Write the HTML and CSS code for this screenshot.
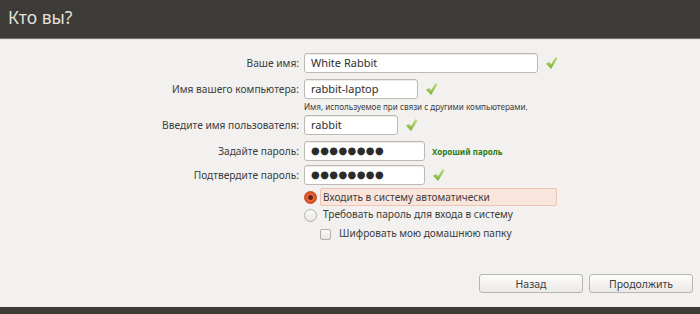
FILE: index.html
```html
<!DOCTYPE html>
<html lang="ru">
<head>
    <meta charset="UTF-8">
    <meta name="viewport" content="width=device-width, initial-scale=1.0">
    <title>Кто вы?</title>
    <link rel="stylesheet" href="styles.css">
</head>
<body>
    <div class="header">Кто вы?</div>

    <div class="page">
        <div class="form">
            <div class="row">
                <label class="label">Ваше имя:</label>
                <div class="field">
                    <div class="input wide">White Rabbit</div>
                    <svg class="check" viewBox="0 0 14 15"><path d="M1 8.3 L4.6 6.4 L6.4 9.2 L11.2 1 L13.6 2.4 L6.6 14 Z"/></svg>
                </div>
            </div>
            <div class="row">
                <label class="label">Имя вашего компьютера:</label>
                <div class="field">
                    <div class="input host">rabbit-laptop</div>
                    <svg class="check" viewBox="0 0 14 15"><path d="M1 8.3 L4.6 6.4 L6.4 9.2 L11.2 1 L13.6 2.4 L6.6 14 Z"/></svg>
                </div>
            </div>
            <div class="hint">Имя, используемое при связи с другими компьютерами.</div>
            <div class="row">
                <label class="label">Введите имя пользователя:</label>
                <div class="field">
                    <div class="input user">rabbit</div>
                    <svg class="check" viewBox="0 0 14 15"><path d="M1 8.3 L4.6 6.4 L6.4 9.2 L11.2 1 L13.6 2.4 L6.6 14 Z"/></svg>
                </div>
            </div>
            <div class="row tight">
                <label class="label">Задайте пароль:</label>
                <div class="field">
                    <div class="input pass"><span class="dots">●●●●●●●●</span></div>
                    <span class="strength">Хороший пароль</span>
                </div>
            </div>
            <div class="row">
                <label class="label">Подтвердите пароль:</label>
                <div class="field">
                    <div class="input pass"><span class="dots">●●●●●●●●</span></div>
                    <svg class="check" viewBox="0 0 14 15"><path d="M1 8.3 L4.6 6.4 L6.4 9.2 L11.2 1 L13.6 2.4 L6.6 14 Z"/></svg>
                </div>
            </div>
        </div>

        <div class="options">
            <div class="option">
                <span class="radio checked"></span>
                <span class="option-text selected">Входить в систему автоматически</span>
            </div>
            <div class="option">
                <span class="radio"></span>
                <span class="option-text">Требовать пароль для входа в систему</span>
            </div>
            <div class="option sub">
                <span class="checkbox"></span>
                <span class="option-text">Шифровать мою домашнюю папку</span>
            </div>
        </div>

        <div class="buttons">
            <button class="btn">Назад</button>
            <button class="btn">Продолжить</button>
        </div>
    </div>

    <div class="footer"></div>

    <svg width="0" height="0" style="position:absolute">
        <defs>
            <linearGradient id="checkGrad" x1="0" y1="0" x2="0" y2="1">
                <stop offset="0" stop-color="#c3e27a"/>
                <stop offset="1" stop-color="#7cae34"/>
            </linearGradient>
        </defs>
    </svg>
</body>
</html>
```

FILE: styles.css
```css
body {
    margin: 0;
    width: 700px;
    height: 314px;
    background-color: #f2f1f0;
    font-family: "Noto Sans", "DejaVu Sans", sans-serif;
    color: #3c3c3c;
    display: flex;
    flex-direction: column;
    overflow: hidden;
}

.header {
    height: 38px;
    background-color: #3c3b37;
    border-bottom: 1px solid #75736d;
    color: #e4e1da;
    font-size: 17.5px;
    line-height: 34px;
    padding-left: 8px;
}

.page {
    flex: 1;
    display: flex;
    flex-direction: column;
    border-top: 1px solid #e6e4e0;
}

.form {
    margin-top: 13px;
    display: flex;
    flex-direction: column;
}

.row {
    display: flex;
    align-items: center;
    height: 20px;
    margin-bottom: 6px;
}

.row.tight {
    margin-bottom: 4px;
}

.label {
    width: 299px;
    text-align: right;
    font-size: 10.2px;
    color: #3c3c3c;
}

.field {
    display: flex;
    align-items: center;
    margin-left: 5px;
}

.input {
    box-sizing: border-box;
    height: 20px;
    border: 1px solid #bdbab3;
    border-radius: 3px;
    background: #fff;
    box-shadow: inset 0 1px 1px #ebe9e5;
    font-size: 11px;
    line-height: 18px;
    padding-left: 6px;
    color: #2e2e2e;
}

.wide { width: 234px; }
.host { width: 114px; }
.user { width: 94px; }
.pass { width: 121px; }

.dots {
    font-size: 10px;
    letter-spacing: 0.4px;
    color: #2b2b2b;
    position: relative;
    top: -1px;
}

.check {
    width: 13px;
    height: 14px;
    margin-left: 7px;
    fill: url(#checkGrad);
}

.strength {
    margin-left: 7px;
    font-size: 8px;
    font-weight: bold;
    color: #2d7b11;
}

.hint {
    margin: -5px 0 1px 304px;
    font-size: 8.1px;
    color: #3c3c3c;
    height: 14px;
    line-height: 14px;
}

.options {
    margin-top: -3px;
    margin-left: 304px;
    display: flex;
    flex-direction: column;
}

.option {
    display: flex;
    align-items: center;
    height: 18px;
    font-size: 10.1px;
}

.sub {
    margin-top: 1px;
    padding-left: 16px;
}

.radio {
    box-sizing: border-box;
    width: 13px;
    height: 13px;
    border-radius: 50%;
    border: 1px solid #b3b0a9;
    background: linear-gradient(#fbfbfa, #e9e7e3);
    margin-right: 3px;
}

.radio.checked {
    border: 1px solid #c4431b;
    background: radial-gradient(circle, #4a2419 0, #6d2d1a 2px, #ea6a3e 3px, #dd4814 6px);
}

.checkbox {
    box-sizing: border-box;
    width: 11px;
    height: 11px;
    border: 1px solid #b3b0a9;
    border-radius: 2px;
    background: linear-gradient(#fbfbfa, #e9e7e3);
    margin-right: 5px;
}

.option-text {
    padding: 0 3px;
    height: 18px;
    line-height: 17px;
    box-sizing: border-box;
}

.option-text.selected {
    width: 237px;
    background-color: #f9e5dc;
    border: 1px solid #efc4b3;
    border-radius: 2px;
    padding: 0 2px;
}

.buttons {
    margin-top: auto;
    margin-bottom: 14px;
    display: flex;
    justify-content: flex-end;
    gap: 6px;
    padding-right: 7px;
}

.btn {
    box-sizing: border-box;
    width: 104px;
    height: 19px;
    border: 1px solid #b9b6af;
    border-radius: 3px;
    background: linear-gradient(#fdfdfc, #ebe9e6);
    font-family: "Noto Sans", "DejaVu Sans", sans-serif;
    font-size: 10.5px;
    color: #3c3c3c;
    padding: 0;
}

.footer {
    height: 7px;
    background-color: #3c3b37;
}
```
